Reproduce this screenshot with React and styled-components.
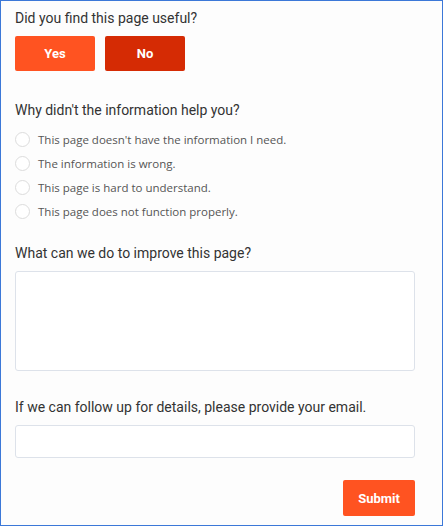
import styled, { createGlobalStyle } from "styled-components";

const GlobalStyle = createGlobalStyle`
  html, body {
    margin: 0;
    padding: 0;
    background: #ffffff;
  }
  * {
    box-sizing: border-box;
  }
`;

const Frame = styled.div`
  width: 443px;
  height: 526px;
  border: 1px solid #3c78d8;
  background: #fdfdfd;
  padding: 8px 27px 0 14px;
  font-family: Roboto, "Liberation Sans", sans-serif;
  color: #333;
`;

const Question = styled.div`
  font-size: 14px;
  line-height: 19px;
  color: #333;
  margin-top: ${(p) => p.$gap || 0}px;
`;

const ButtonRow = styled.div`
  display: flex;
  gap: 10px;
  margin-top: 8px;
`;

const Choice = styled.button`
  width: 80px;
  height: 35px;
  border: none;
  border-radius: 2px;
  background: ${(p) => (p.$dark ? "#d52b04" : "#ff5321")};
  color: #fff;
  font-family: Roboto, "Liberation Sans", sans-serif;
  font-weight: 700;
  font-size: 13px;
  cursor: pointer;
`;

const RadioList = styled.div`
  margin-top: 7px;
  display: flex;
  flex-direction: column;
`;

const RadioRow = styled.label`
  display: flex;
  align-items: center;
  gap: 8px;
  height: 24px;
  font-family: "Open Sans", "DejaVu Sans", sans-serif;
  font-size: 11.5px;
  color: #555;
`;

const Circle = styled.span`
  width: 15px;
  height: 15px;
  border-radius: 50%;
  border: 1px solid #dcdcdc;
  background: #fff;
  flex-shrink: 0;
`;

const TextArea = styled.textarea`
  display: block;
  width: 400px;
  height: 100px;
  margin-top: 8px;
  border: 1px solid #dde2ea;
  border-radius: 3px;
  background: #fff;
  resize: none;
`;

const Input = styled.input`
  display: block;
  width: 400px;
  height: 33px;
  margin-top: 8px;
  border: 1px solid #dde2ea;
  border-radius: 3px;
  background: #fff;
`;

const Footer = styled.div`
  display: flex;
  justify-content: flex-end;
  width: 400px;
  margin-top: 22px;
`;

const Submit = styled.button`
  width: 72px;
  height: 36px;
  border: none;
  border-radius: 2px;
  background: #ff5321;
  color: #fff;
  font-family: Roboto, "Liberation Sans", sans-serif;
  font-weight: 700;
  font-size: 13px;
`;

const reasons = [
  "This page doesn't have the information I need.",
  "The information is wrong.",
  "This page is hard to understand.",
  "This page does not function properly.",
];

export default function App() {
  return (
    <>
      <GlobalStyle />
      <Frame>
        <Question>Did you find this page useful?</Question>
        <ButtonRow>
          <Choice>Yes</Choice>
          <Choice $dark>No</Choice>
        </ButtonRow>
        <Question $gap={30}>Why didn't the information help you?</Question>
        <RadioList>
          {reasons.map((r) => (
            <RadioRow key={r}>
              <Circle />
              {r}
            </RadioRow>
          ))}
        </RadioList>
        <Question $gap={21}>What can we do to improve this page?</Question>
        <TextArea />
        <Question $gap={27}>
          If we can follow up for details, please provide your email.
        </Question>
        <Input type="email" />
        <Footer>
          <Submit>Submit</Submit>
        </Footer>
      </Frame>
    </>
  );
}
